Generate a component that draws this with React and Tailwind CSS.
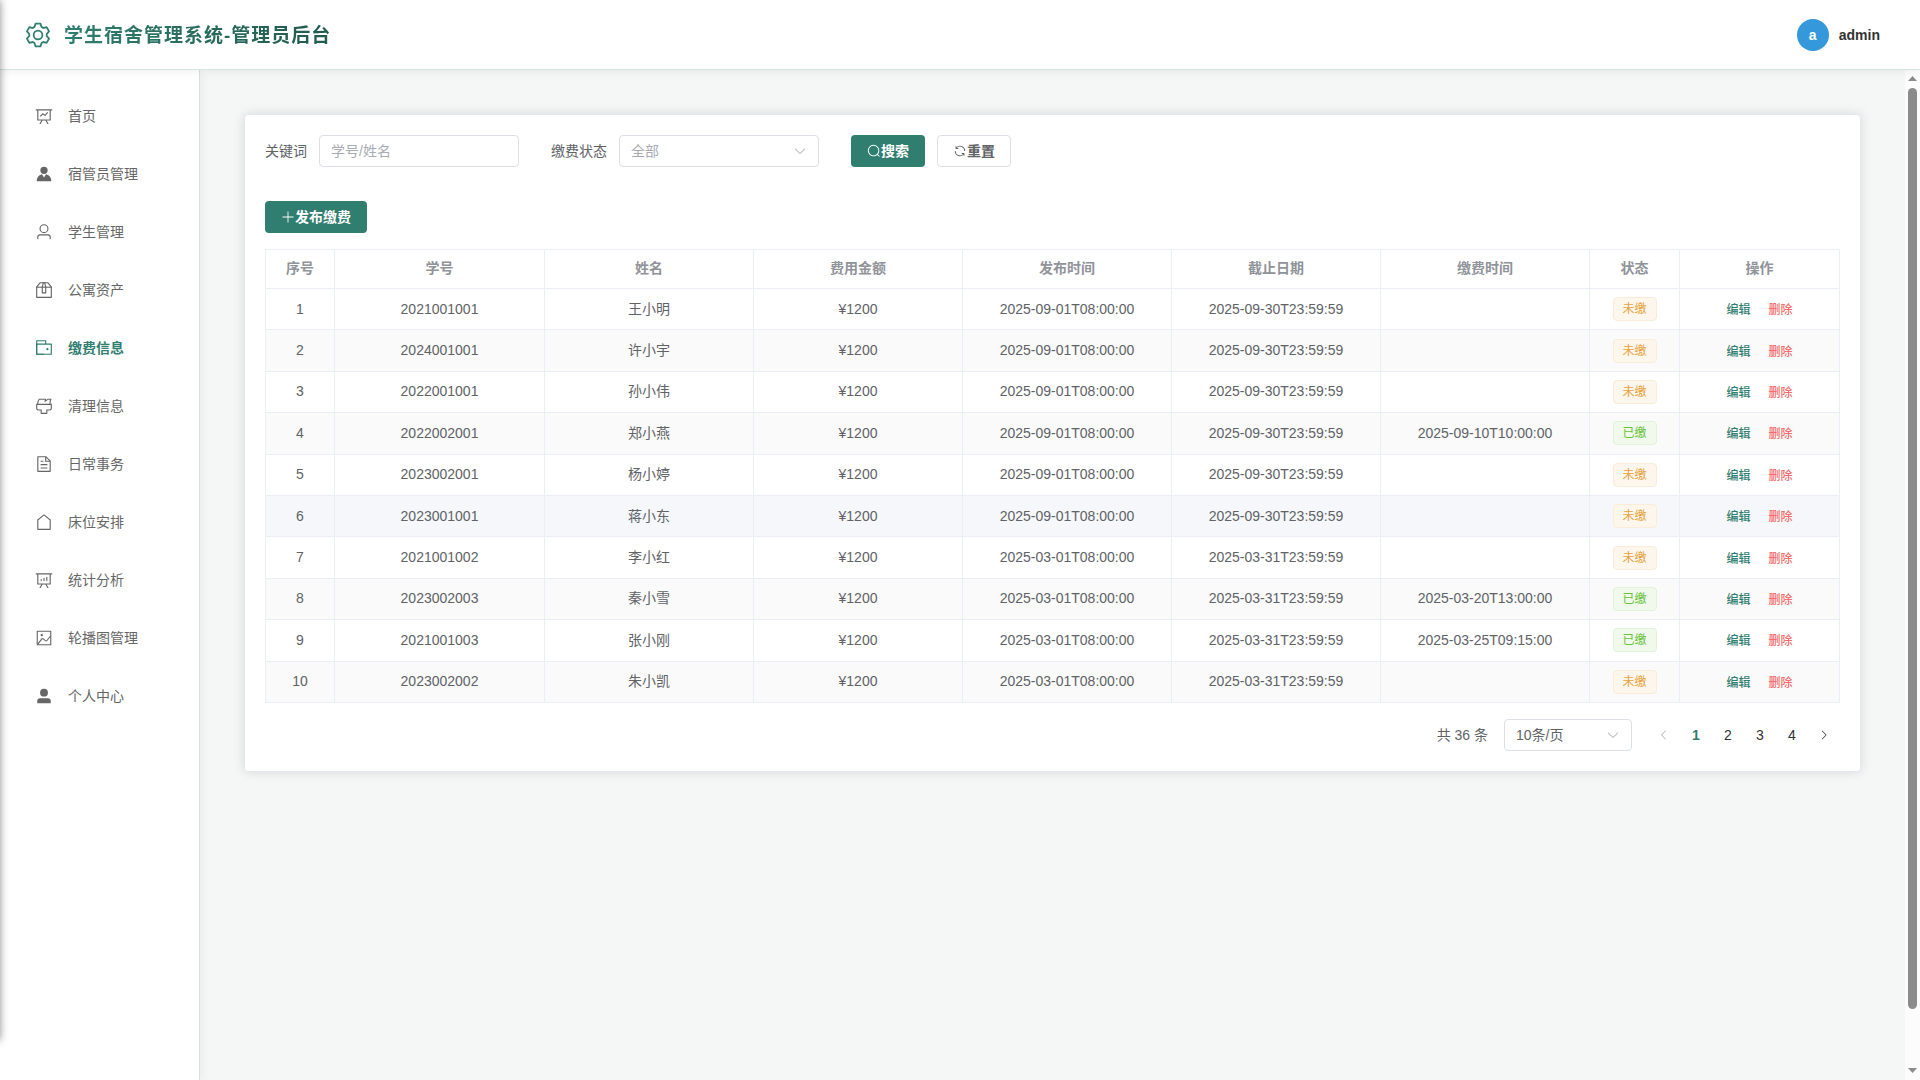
import { useState } from "react";
import clsx from "clsx";

const ICONS = {
    setting: ["M600.704 64a32 32 0 0 1 30.464 22.208l35.2 109.376c14.784 7.232 28.928 15.36 42.432 24.512l112.384-24.192a32 32 0 0 1 34.432 15.36L944.32 364.8a32 32 0 0 1-4.032 37.504l-77.12 85.12a357.12 357.12 0 0 1 0 49.024l77.12 85.248a32 32 0 0 1 4.032 37.504l-88.704 153.6a32 32 0 0 1-34.432 15.296L708.8 803.904c-13.44 9.088-27.648 17.28-42.368 24.512l-35.264 109.376A32 32 0 0 1 600.704 960H423.296a32 32 0 0 1-30.464-22.208L357.696 828.48a351.616 351.616 0 0 1-42.56-24.64l-112.32 24.256a32 32 0 0 1-34.432-15.36L79.68 659.2a32 32 0 0 1 4.032-37.504l77.12-85.248a357.12 357.12 0 0 1 0-48.896l-77.12-85.248A32 32 0 0 1 79.68 364.8l88.704-153.6a32 32 0 0 1 34.432-15.296l112.32 24.256c13.568-9.152 27.776-17.408 42.56-24.64l35.2-109.312A32 32 0 0 1 423.232 64H600.64zm-23.424 64H446.72l-36.352 113.088-24.512 11.968a294.113 294.113 0 0 0-34.816 20.096l-22.656 15.36-116.224-25.088-65.28 113.152 79.68 88.192-1.92 27.136a293.12 293.12 0 0 0 0 40.192l1.92 27.136-79.808 88.192 65.344 113.152 116.224-25.024 22.656 15.296a294.113 294.113 0 0 0 34.816 20.096l24.512 11.968L446.72 896h130.688l36.48-113.152 24.448-11.904a288.282 288.282 0 0 0 34.752-20.096l22.592-15.296 116.288 25.024 65.28-113.152-79.744-88.192 1.92-27.136a293.12 293.12 0 0 0 0-40.256l-1.92-27.136 79.808-88.128-65.344-113.152-116.288 24.96-22.592-15.232a287.616 287.616 0 0 0-34.752-20.096l-24.448-11.904L577.344 128zM512 320a192 192 0 1 1 0 384 192 192 0 0 1 0-384m0 64a128 128 0 1 0 0 256 128 128 0 0 0 0-256"],
    dataLine: ["M359.168 768H160a32 32 0 0 1-32-32V192H64a32 32 0 0 1 0-64h896a32 32 0 1 1 0 64h-64v544a32 32 0 0 1-32 32H665.216l110.848 192h-73.856L591.36 768H433.024L322.176 960H248.32zM832 192H192v512h640zM342.656 534.656a32 32 0 1 1-45.312-45.312L444.992 341.76l125.44 94.08L679.04 300.032a32 32 0 1 1 49.92 39.936L581.632 524.224 451.008 426.24 342.656 534.592z"],
    avatar: ["M628.736 528.896A416 416 0 0 1 928 928H96a415.872 415.872 0 0 1 299.264-399.104L512 704zM720 304a208 208 0 1 1-416 0 208 208 0 0 1 416 0"],
    user: ["M512 512a192 192 0 1 0 0-384 192 192 0 0 0 0 384m0 64a256 256 0 1 1 0-512 256 256 0 0 1 0 512m320 320v-96a96 96 0 0 0-96-96H288a96 96 0 0 0-96 96v96a32 32 0 1 1-64 0v-96a160 160 0 0 1 160-160h448a160 160 0 0 1 160 160v96a32 32 0 1 1-64 0"],
    box: [
        "M317.056 128 128 344.064V896h768V344.064L706.944 128zm-14.528-64h418.944a32 32 0 0 1 24.064 10.88l206.528 236.096A32 32 0 0 1 960 332.032V928a32 32 0 0 1-32 32H96a32 32 0 0 1-32-32V332.032a32 32 0 0 1 7.936-21.12L278.4 75.008A32 32 0 0 1 302.528 64z",
        "M64 320h896v64H64z",
        "M448 327.872V640h128V327.872L526.08 128h-28.16zM448 64h128l64 256v352a32 32 0 0 1-32 32H416a32 32 0 0 1-32-32V320z",
    ],
    wallet: [
        "M640 288h-64V128H128v704h384v32a32 32 0 0 0 32 32H96a32 32 0 0 1-32-32V96a32 32 0 0 1 32-32h512a32 32 0 0 1 32 32z",
        "M128 320v512h768V320zm-32-64h832a32 32 0 0 1 32 32v576a32 32 0 0 1-32 32H96a32 32 0 0 1-32-32V288a32 32 0 0 1 32-32",
        "M704 640a64 64 0 1 1 0-128 64 64 0 0 1 0 128",
    ],
    brush: ["M896 448H128v192a64 64 0 0 0 64 64h192v192h256V704h192a64 64 0 0 0 64-64zm-770.752-64c0-47.552 5.248-90.24 15.552-128 14.72-54.016 42.496-107.392 83.2-160h417.28l-15.36 70.336L736 96h211.2c-24.832 42.88-41.92 96.256-51.2 160a663.872 663.872 0 0 0-6.144 128H960v256a128 128 0 0 1-128 128H704v160a32 32 0 0 1-32 32H352a32 32 0 0 1-32-32V768H192A128 128 0 0 1 64 640V384zm64 0h636.544c-2.048-45.824.256-91.584 6.848-137.216 4.48-30.848 10.688-59.776 18.688-86.784h-96.64l-221.12 141.248L561.92 160H256.512c-25.856 37.888-43.776 75.456-53.952 112.832-8.768 32.064-13.248 69.12-13.312 111.168"],
    document: ["M832 384H576V128H192v768h640zm-26.496-64L640 154.496V320zM160 64h480l256 256v608a32 32 0 0 1-32 32H160a32 32 0 0 1-32-32V96a32 32 0 0 1 32-32m160 448h384v64H320zm0-192h160v64H320zm0 384h384v64H320z"],
    house: ["M192 413.952V896h640V413.952L512 147.328zM139.52 374.4l352-293.312a32 32 0 0 1 40.96 0l352 293.312A32 32 0 0 1 896 398.976V928a32 32 0 0 1-32 32H160a32 32 0 0 1-32-32V398.976a32 32 0 0 1 11.52-24.576"],
    dataAnalysis: ["M665.216 768l110.848 192h-73.856L591.36 768H433.024L322.176 960H248.32l110.848-192H160a32 32 0 0 1-32-32V192H64a32 32 0 0 1 0-64h896a32 32 0 1 1 0 64h-64v544a32 32 0 0 1-32 32zM832 192H192v512h640zM352 448a32 32 0 0 1 32 32v64a32 32 0 0 1-64 0v-64a32 32 0 0 1 32-32m160-64a32 32 0 0 1 32 32v128a32 32 0 0 1-64 0V416a32 32 0 0 1 32-32m160-64a32 32 0 0 1 32 32v192a32 32 0 1 1-64 0V352a32 32 0 0 1 32-32"],
    picture: [
        "M160 160v704h704V160zm-32-64h768a32 32 0 0 1 32 32v768a32 32 0 0 1-32 32H128a32 32 0 0 1-32-32V128a32 32 0 0 1 32-32",
        "M384 288q64 0 64 64t-64 64q-64 0-64-64t64-64M185.408 876.992l-50.816-38.912L350.72 556.032a96 96 0 0 1 134.592-17.856l1.856 1.472 122.88 99.136a32 32 0 0 0 44.992-4.864l216-269.888 49.92 39.936-215.808 269.824-.256.32a96 96 0 0 1-135.04 14.464l-122.88-99.072-.64-.512a32 32 0 0 0-44.8 5.952z",
    ],
    userFilled: ["M288 320a224 224 0 1 0 448 0 224 224 0 1 0-448 0m544 608H160a32 32 0 0 1-32-32v-96a160 160 0 0 1 160-160h448a160 160 0 0 1 160 160v96a32 32 0 0 1-32 32z"],
    search: ["m795.904 750.72 124.992 124.928a32 32 0 0 1-45.248 45.248L750.656 795.904a416 416 0 1 1 45.248-45.248zM480 832a352 352 0 1 0 0-704 352 352 0 0 0 0 704"],
    refresh: ["M771.776 794.88A384 384 0 0 1 128 512h64a320 320 0 0 0 555.712 216.448H654.72a32 32 0 1 1 0-64h149.056a32 32 0 0 1 32 32v148.928a32 32 0 1 1-64 0v-50.56zM276.288 295.616h92.992a32 32 0 0 1 0 64H220.16a32 32 0 0 1-32-32V178.56a32 32 0 0 1 64 0v50.56A384 384 0 0 1 896.128 512h-64a320 320 0 0 0-555.776-216.384z"],
    plus: ["M480 480V128a32 32 0 0 1 64 0v352h352a32 32 0 1 1 0 64H544v352a32 32 0 1 1-64 0V544H128a32 32 0 0 1 0-64z"],
    arrowDown: ["M831.872 340.864 512 652.672 192.128 340.864a30.592 30.592 0 0 0-42.752 0 29.12 29.12 0 0 0 0 41.6L489.664 714.24a32 32 0 0 0 44.672 0l340.288-331.712a29.12 29.12 0 0 0 0-41.728 30.592 30.592 0 0 0-42.752 0z"],
    arrowLeft: ["M609.408 149.376 277.76 489.6a32 32 0 0 0 0 44.672l331.648 340.352a29.12 29.12 0 0 0 41.728 0 30.592 30.592 0 0 0 0-42.752L339.264 511.936l311.872-319.872a30.592 30.592 0 0 0 0-42.688 29.12 29.12 0 0 0-41.728 0z"],
    arrowRight: ["M340.864 149.312a30.592 30.592 0 0 0 0 42.752L652.736 512 340.864 831.872a30.592 30.592 0 0 0 0 42.752 29.12 29.12 0 0 0 41.728 0L714.24 534.336a32 32 0 0 0 0-44.672L382.592 149.376a29.12 29.12 0 0 0-41.728 0z"],
};

const MENU = [
    { name: "首页", icon: "dataLine" },
    { name: "宿管员管理", icon: "avatar" },
    { name: "学生管理", icon: "user" },
    { name: "公寓资产", icon: "box" },
    { name: "缴费信息", icon: "wallet" },
    { name: "清理信息", icon: "brush" },
    { name: "日常事务", icon: "document" },
    { name: "床位安排", icon: "house" },
    { name: "统计分析", icon: "dataAnalysis" },
    { name: "轮播图管理", icon: "picture" },
    { name: "个人中心", icon: "userFilled" },
];

const COLUMNS = ["序号", "学号", "姓名", "费用金额", "发布时间", "截止日期", "缴费时间", "状态", "操作"];

const ROWS = [
    { no: "2021001001", name: "王小明", start: "2025-09-01T08:00:00", end: "2025-09-30T23:59:59" },
    { no: "2024001001", name: "许小宇", start: "2025-09-01T08:00:00", end: "2025-09-30T23:59:59" },
    { no: "2022001001", name: "孙小伟", start: "2025-09-01T08:00:00", end: "2025-09-30T23:59:59" },
    { no: "2022002001", name: "郑小燕", start: "2025-09-01T08:00:00", end: "2025-09-30T23:59:59", paid: "2025-09-10T10:00:00" },
    { no: "2023002001", name: "杨小婷", start: "2025-09-01T08:00:00", end: "2025-09-30T23:59:59" },
    { no: "2023001001", name: "蒋小东", start: "2025-09-01T08:00:00", end: "2025-09-30T23:59:59", hover: true },
    { no: "2021001002", name: "李小红", start: "2025-03-01T08:00:00", end: "2025-03-31T23:59:59" },
    { no: "2023002003", name: "秦小雪", start: "2025-03-01T08:00:00", end: "2025-03-31T23:59:59", paid: "2025-03-20T13:00:00" },
    { no: "2021001003", name: "张小刚", start: "2025-03-01T08:00:00", end: "2025-03-31T23:59:59", paid: "2025-03-25T09:15:00" },
    { no: "2023002002", name: "朱小凯", start: "2025-03-01T08:00:00", end: "2025-03-31T23:59:59" },
];

const GRID = "grid grid-cols-[70px_210px_repeat(5,209px)_90px_160px]";

function Icon({ name, className }) {
    return (
        <svg viewBox="0 0 1024 1024" fill="currentColor" className={clsx("shrink-0", className)}>
            {ICONS[name].map((d) => (
                <path key={d} d={d} />
            ))}
        </svg>
    );
}

function Cell({ first, className, children }) {
    return (
        <div
            className={clsx(
                "flex items-center justify-center border-r border-b border-[#ebeef5]",
                first && "border-l",
                className
            )}
        >
            {children}
        </div>
    );
}

function Header() {
    return (
        <header className="relative z-20 flex h-[70px] items-center justify-between border-b border-[#d5e5e2] bg-white pr-10 pl-6 shadow-[0_2px_10px_rgba(0,0,0,0.06)]">
            <div className="flex items-center gap-3">
                <Icon name="setting" className="h-7 w-7 text-[#2f7e6f]" />
                <h1 className="bg-linear-to-r from-[#2f7e6f] to-[#225a4e] bg-clip-text pt-0.5 text-[19px] leading-7 font-bold tracking-[1px] text-transparent">
                    学生宿舍管理系统-管理员后台
                </h1>
            </div>
            <div className="flex items-center gap-2.5">
                <div className="flex h-8 w-8 items-center justify-center rounded-full bg-[#3498db] pt-px text-sm font-bold text-white">
                    a
                </div>
                <span className="text-sm font-bold text-[#333]">admin</span>
            </div>
        </header>
    );
}

function Sidebar({ active, setActive }) {
    return (
        <aside className="relative z-10 w-[200px] shrink-0 border-r border-[#d5e0de] bg-white pt-[17px] shadow-[2px_0_10px_rgba(0,0,0,0.05)]">
            {MENU.map((item) => (
                <button
                    key={item.name}
                    onClick={() => setActive(item.name)}
                    className={clsx(
                        "flex h-[58px] w-full items-center gap-[15px] pl-[35px] text-sm",
                        active === item.name ? "font-bold text-[#2f7e6f]" : "text-[#666]"
                    )}
                >
                    <Icon name={item.icon} className="h-[18px] w-[18px]" />
                    <span>{item.name}</span>
                </button>
            ))}
        </aside>
    );
}

function SearchForm() {
    return (
        <div className="flex h-8 items-center">
            <label className="mr-3">关键词</label>
            <input
                placeholder="学号/姓名"
                className="h-8 w-[200px] rounded border border-[#dcdfe6] px-[11px] outline-none placeholder:text-[#a8abb2]"
            />
            <label className="mr-3 ml-8">缴费状态</label>
            <div className="flex h-8 w-[200px] items-center justify-between rounded border border-[#dcdfe6] px-[11px] text-[#a8abb2]">
                全部
                <Icon name="arrowDown" className="h-3.5 w-3.5" />
            </div>
            <button className="ml-8 flex h-8 w-[74px] items-center justify-center rounded bg-[#2f7e6f] font-bold text-white">
                <Icon name="search" className="h-3.5 w-3.5" />
                搜索
            </button>
            <button className="ml-3 flex h-8 w-[74px] items-center justify-center rounded border border-[#dcdfe6] font-bold">
                <Icon name="refresh" className="h-3.5 w-3.5" />
                重置
            </button>
        </div>
    );
}

function FeeTable() {
    return (
        <div className="mt-4 border-t border-[#ebeef5]">
            <div className={clsx(GRID, "h-[39px] font-bold text-[#909399]")}>
                {COLUMNS.map((col, idx) => (
                    <Cell key={col} first={idx === 0} className="pb-0.5">{col}</Cell>
                ))}
            </div>
            {ROWS.map((row, idx) => (
                <div
                    key={row.no}
                    className={clsx(
                        GRID,
                        "h-[41.4px]",
                        row.hover ? "bg-[#f5f7fa]" : idx % 2 ? "bg-[#fafafa]" : "bg-white"
                    )}
                >
                    <Cell first className="pb-px">{idx + 1}</Cell>
                    <Cell className="pb-px">{row.no}</Cell>
                    <Cell className="pb-px">{row.name}</Cell>
                    <Cell className="pb-px">¥1200</Cell>
                    <Cell className="pb-px">{row.start}</Cell>
                    <Cell className="pb-px">{row.end}</Cell>
                    <Cell className="pb-px">{row.paid}</Cell>
                    <Cell>
                        <span
                            className={clsx(
                                "flex h-6 w-11 items-center justify-center rounded border text-xs",
                                row.paid
                                    ? "border-[#e1f3d8] bg-[#f0f9eb] text-[#67c23a]"
                                    : "border-[#faecd8] bg-[#fdf6ec] text-[#e6a23c]"
                            )}
                        >
                            {row.paid ? "已缴" : "未缴"}
                        </span>
                    </Cell>
                    <Cell className="gap-[18px] pt-0.5 text-xs font-medium">
                        <button className="text-[#2f7e6f]">编辑</button>
                        <button className="text-[#f56c6c]">删除</button>
                    </Cell>
                </div>
            ))}
        </div>
    );
}

function Pagination() {
    const [page, setPage] = useState(1);

    return (
        <div className="mt-4 flex h-8 items-center justify-end">
            <span>共 36 条</span>
            <div className="mx-4 flex h-8 w-32 items-center justify-between rounded border border-[#dcdfe6] px-[11px]">
                10条/页
                <Icon name="arrowDown" className="h-3.5 w-3.5 text-[#a8abb2]" />
            </div>
            <button className="flex h-8 w-8 items-center justify-center text-[#a8abb2]">
                <Icon name="arrowLeft" className="h-3 w-3" />
            </button>
            {[1, 2, 3, 4].map((n) => (
                <button
                    key={n}
                    onClick={() => setPage(n)}
                    className={clsx("h-8 w-8", page === n ? "font-bold text-[#2f7e6f]" : "text-[#303133]")}
                >
                    {n}
                </button>
            ))}
            <button className="flex h-8 w-8 items-center justify-center text-[#303133]">
                <Icon name="arrowRight" className="h-3 w-3" />
            </button>
        </div>
    );
}

function Scrollbar() {
    return (
        <div className="flex w-[15px] shrink-0 flex-col items-center bg-[#fcfcfc] pt-1.5 pb-[7px] text-[#8b8b8b]">
            <svg viewBox="0 0 9 5" className="h-[5px] w-[9px]" fill="currentColor">
                <path d="M4.5 0 9 5H0z" />
            </svg>
            <div className="mt-[7px] h-[921px] w-[9px] rounded-full bg-[#8b8b8b]" />
            <svg viewBox="0 0 9 5" className="mt-auto h-[5px] w-[9px]" fill="currentColor">
                <path d="M0 0h9L4.5 5z" />
            </svg>
        </div>
    );
}

export default function App() {
    const [active, setActive] = useState("缴费信息");

    return (
        <div className="relative flex h-[1080px] w-[1920px] flex-col overflow-hidden bg-[#f4f7f6] font-['Liberation_Sans','Noto_Sans_CJK_SC',sans-serif] text-sm text-[#606266]">
            <Header />
            <div className="flex min-h-0 flex-1">
                <Sidebar active={active} setActive={setActive} />
                <main className="min-w-0 flex-1 px-11 pt-11">
                    <div className="rounded border border-[#e4e7ed] bg-white p-5 shadow-[0_0_12px_rgba(0,0,0,0.12)]">
                        <SearchForm />
                        <button className="mt-[34px] flex h-8 w-[102px] items-center justify-center rounded bg-[#2f7e6f] font-bold text-white">
                            <Icon name="plus" className="h-3.5 w-3.5" />
                            发布缴费
                        </button>
                        <FeeTable />
                        <Pagination />
                    </div>
                </main>
                <Scrollbar />
            </div>

            {/* Edge shadow of the collapsed drawer */}
            <div className="pointer-events-none absolute top-0 -left-5 z-30 h-[1040px] w-5 shadow-[0_0_8px_rgba(0,0,0,0.45)]" />
        </div>
    );
}
